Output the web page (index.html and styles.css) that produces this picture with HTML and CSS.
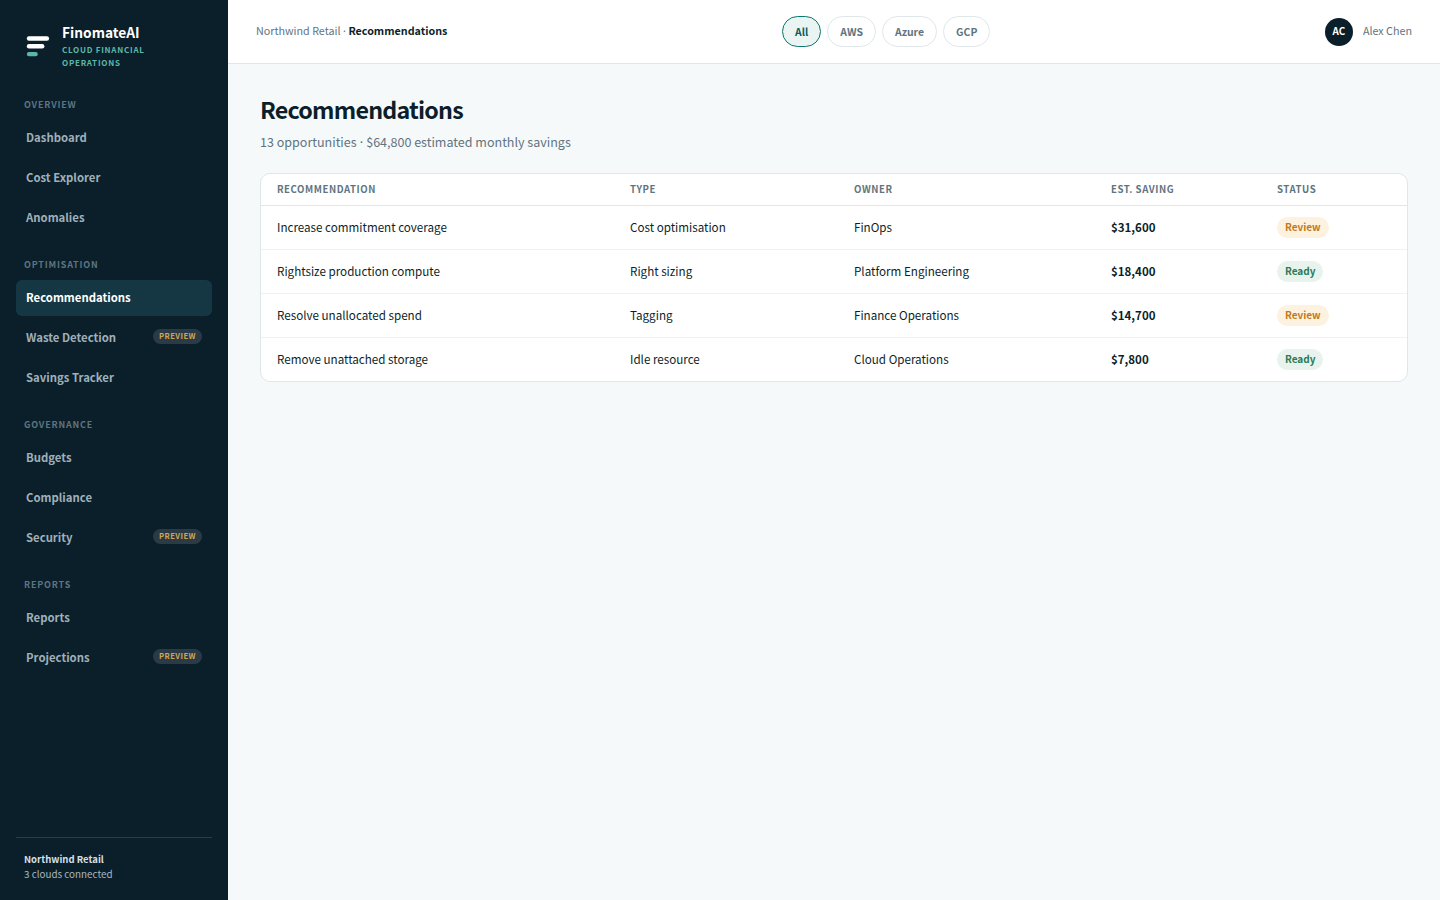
FILE: index.html
```html
<!DOCTYPE html>
<html lang="en">
<head>
  <meta charset="UTF-8">
  <title>FinomateAI - Recommendations</title>
  <link rel="stylesheet" href="styles.css">
</head>
<body>
  <div class="app">
    <aside class="sidebar">
      <div class="brand">
        <svg class="brand-mark" width="24" height="24" viewBox="0 0 24 24">
          <rect x="0.8" y="2.3" width="22.3" height="4.4" rx="2.2" fill="#ffffff"/>
          <rect x="0.8" y="10" width="17.6" height="4.4" rx="2.2" fill="#ffffff"/>
          <rect x="0.8" y="17.9" width="11" height="4.4" rx="2.2" fill="#5bb8a8"/>
        </svg>
        <div>
          <div class="brand-name">FinomateAI</div>
          <div class="brand-sub">CLOUD FINANCIAL OPERATIONS</div>
        </div>
      </div>

      <nav class="nav">
        <div class="nav-group">
          <div class="nav-label">OVERVIEW</div>
          <a class="nav-item">Dashboard</a>
          <a class="nav-item">Cost Explorer</a>
          <a class="nav-item">Anomalies</a>
        </div>
        <div class="nav-group">
          <div class="nav-label">OPTIMISATION</div>
          <a class="nav-item active">Recommendations</a>
          <a class="nav-item">Waste Detection <span class="tag">PREVIEW</span></a>
          <a class="nav-item">Savings Tracker</a>
        </div>
        <div class="nav-group">
          <div class="nav-label">GOVERNANCE</div>
          <a class="nav-item">Budgets</a>
          <a class="nav-item">Compliance</a>
          <a class="nav-item">Security <span class="tag">PREVIEW</span></a>
        </div>
        <div class="nav-group">
          <div class="nav-label">REPORTS</div>
          <a class="nav-item">Reports</a>
          <a class="nav-item">Projections <span class="tag">PREVIEW</span></a>
        </div>
      </nav>

      <div class="tenant">
        <div class="tenant-name">Northwind Retail</div>
        <div class="tenant-info">3 clouds connected</div>
      </div>
    </aside>

    <div class="content">
      <header class="topbar">
        <div class="crumbs">Northwind Retail <span class="sep">·</span> <strong>Recommendations</strong></div>
        <div class="filters">
          <button class="pill selected">All</button>
          <button class="pill">AWS</button>
          <button class="pill">Azure</button>
          <button class="pill">GCP</button>
        </div>
        <div class="user">
          <span class="avatar">AC</span>
          <span class="user-name">Alex Chen</span>
        </div>
      </header>

      <main class="main">
        <h1>Recommendations</h1>
        <p class="summary">13 opportunities <span class="sep">·</span> $64,800 estimated monthly savings</p>

        <div class="card">
          <table>
            <thead>
              <tr>
                <th class="col-name">RECOMMENDATION</th>
                <th class="col-type">TYPE</th>
                <th class="col-owner">OWNER</th>
                <th class="col-saving">EST. SAVING</th>
                <th>STATUS</th>
              </tr>
            </thead>
            <tbody>
              <tr>
                <td>Increase commitment coverage</td>
                <td>Cost optimisation</td>
                <td>FinOps</td>
                <td class="money">$31,600</td>
                <td><span class="badge review">Review</span></td>
              </tr>
              <tr>
                <td>Rightsize production compute</td>
                <td>Right sizing</td>
                <td>Platform Engineering</td>
                <td class="money">$18,400</td>
                <td><span class="badge ready">Ready</span></td>
              </tr>
              <tr>
                <td>Resolve unallocated spend</td>
                <td>Tagging</td>
                <td>Finance Operations</td>
                <td class="money">$14,700</td>
                <td><span class="badge review">Review</span></td>
              </tr>
              <tr>
                <td>Remove unattached storage</td>
                <td>Idle resource</td>
                <td>Cloud Operations</td>
                <td class="money">$7,800</td>
                <td><span class="badge ready">Ready</span></td>
              </tr>
            </tbody>
          </table>
        </div>
      </main>
    </div>
  </div>
</body>
</html>
```

FILE: styles.css
```css
* {
  box-sizing: border-box;
}

body {
  margin: 0;
  font-family: "Noto Sans CJK JP", "Noto Sans", sans-serif;
  font-size: 11.63px;
  color: #0b1f2a;
  background: #f6f9fa;
}

.app {
  display: flex;
  height: 900px;
}

.sep {
  margin: 0 -1.5px;
}

/* sidebar */
.sidebar {
  width: 228px;
  flex-shrink: 0;
  display: flex;
  flex-direction: column;
  padding: 0 16px;
  background: #0b1f2a;
}

.brand {
  display: flex;
  align-items: center;
  gap: 12px;
  height: 64px;
  margin-top: 14px;
  padding-left: 10px;
}

.brand-mark {
  flex-shrink: 0;
}

.brand-name {
  margin-bottom: 2px;
  font-size: 13.76px;
  font-weight: 700;
  line-height: 18px;
  color: #ffffff;
}

.brand-sub {
  max-width: 90px;
  font-size: 8.05px;
  font-weight: 700;
  line-height: 13px;
  letter-spacing: 0.73px;
  color: #5bb8a8;
}

.nav {
  flex: 1;
  padding-top: 20px;
}

.nav-group {
  margin-bottom: 22px;
}

.nav-label {
  height: 22px;
  padding-left: 8px;
  font-size: 8.95px;
  font-weight: 700;
  line-height: 13px;
  letter-spacing: 0.83px;
  color: #5f7480;
}

.nav-item {
  display: flex;
  align-items: center;
  justify-content: space-between;
  height: 36px;
  margin-bottom: 4px;
  padding: 0 10px 2px;
  border-radius: 6px;
  font-size: 11.35px;
  font-weight: 600;
  color: #9fb0ba;
}

.nav-item.active {
  background: #153743;
  color: #ffffff;
}

.tag {
  margin-bottom: 1px;
  padding: 0 6px 1px;
  border-radius: 8px;
  background: #2b3b45;
  font-size: 7.6px;
  font-weight: 700;
  line-height: 14px;
  letter-spacing: 0.45px;
  color: #d0a655;
}

.tenant {
  height: 63px;
  padding: 14px 8px 0;
  border-top: 1px solid #2b3b46;
  font-size: 9.85px;
  line-height: 15px;
}

.tenant-name {
  font-size: 9.5px;
  font-weight: 600;
  color: #d5dfe4;
}

.tenant-info {
  color: #a9b8c0;
}

/* top bar */
.content {
  flex: 1;
  display: flex;
  flex-direction: column;
}

.topbar {
  display: flex;
  align-items: center;
  justify-content: space-between;
  height: 64px;
  padding: 0 28px;
  background: #ffffff;
  border-bottom: 1px solid #dfe7ea;
}

.crumbs {
  padding-bottom: 2px;
  font-size: 10.74px;
  color: #5f7480;
}

.crumbs strong {
  font-weight: 700;
  color: #0b1f2a;
}

.filters {
  display: flex;
  gap: 6px;
}

.pill {
  height: 31px;
  padding: 0 12px 1px;
  border: 1px solid #dfe7ea;
  border-radius: 16px;
  background: #ffffff;
  font-family: inherit;
  font-size: 10.45px;
  font-weight: 600;
  color: #5f7480;
}

.pill.selected {
  border-color: #0f766e;
  background: #e9f4f3;
  color: #0d5c5c;
}

.user {
  display: flex;
  align-items: center;
  gap: 10px;
}

.avatar {
  display: flex;
  align-items: center;
  justify-content: center;
  width: 28px;
  height: 28px;
  padding-bottom: 1px;
  border-radius: 50%;
  background: #0b1f2a;
  font-size: 9.85px;
  font-weight: 700;
  color: #ffffff;
}

.user-name {
  padding-bottom: 2px;
  font-size: 10.74px;
  color: #5f7480;
}

/* page */
.main {
  flex: 1;
  padding: 30px 32px;
}

h1 {
  margin: 0;
  font-size: 23.27px;
  font-weight: 700;
  line-height: 30px;
  letter-spacing: -0.78px;
}

.summary {
  margin: 8px 0 21px;
  font-size: 12.53px;
  line-height: 20px;
  color: #5f7480;
}

.card {
  overflow: hidden;
  border: 1px solid #dfe7ea;
  border-radius: 10px;
  background: #ffffff;
}

table {
  width: 100%;
  border-collapse: collapse;
  table-layout: fixed;
}

th {
  height: 31px;
  padding: 0 16px;
  border-bottom: 1px solid #dfe7ea;
  font-size: 9.6px;
  font-weight: 700;
  letter-spacing: 0.57px;
  text-align: left;
  color: #5f7480;
}

.col-name { width: 353px; }
.col-type { width: 224px; }
.col-owner { width: 257px; }
.col-saving { width: 166px; }

td {
  height: 44px;
  padding: 0 16px;
  border-bottom: 1px solid #eef2f4;
  font-size: 11.63px;
}

tr:last-child td {
  border-bottom: none;
}

.money {
  font-size: 11.5px;
  font-weight: 600;
}

.badge {
  display: inline-block;
  padding: 0 8px 1px;
  border-radius: 11px;
  font-size: 10px;
  font-weight: 700;
  line-height: 20px;
}

.badge.review {
  background: #fdf1e0;
  color: #c27a1f;
}

.badge.ready {
  background: #e8f3ee;
  color: #2c7a58;
}
```
